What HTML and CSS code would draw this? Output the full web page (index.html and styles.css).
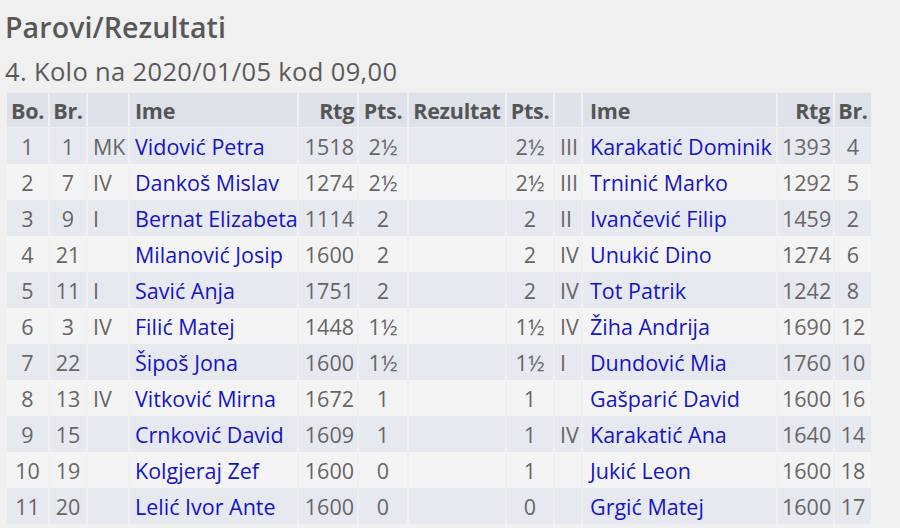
FILE: index.html
```html
<!DOCTYPE html>
<html lang="hr">
<head>
<meta charset="utf-8">
<title>Parovi/Rezultati</title>
<link rel="stylesheet" href="styles.css">
</head>
<body>
<div class="panel">
  <h1 class="title">Parovi/Rezultati</h1>
  <h2 class="round">4. Kolo na 2020/01/05 kod 09,00</h2>
  <table class="pairs">
    <colgroup>
      <col class="c-bo"><col class="c-br"><col class="c-cls"><col class="c-ime"><col class="c-rtg"><col class="c-pts">
      <col class="c-rez"><col class="c-pts2"><col class="c-cls2"><col class="c-ime2"><col class="c-rtg2"><col class="c-br2">
    </colgroup>
    <thead>
      <tr>
        <th class="ctr">Bo.</th><th class="ctr">Br.</th><th></th><th class="lft">Ime</th><th class="rgt">Rtg</th><th class="ctr">Pts.</th>
        <th class="ctr">Rezultat</th><th class="ctr">Pts.</th><th></th><th class="lft ime2">Ime</th><th class="rgt">Rtg</th><th class="ctr">Br.</th>
      </tr>
    </thead>
    <tbody>
      <tr><td class="ctr">1</td><td class="ctr">1</td><td class="lft">MK</td><td class="lft"><a href="#">Vidović Petra</a></td><td class="rgt">1518</td><td class="ctr">2½</td><td></td><td class="ctr">2½</td><td class="lft">III</td><td class="lft ime2"><a href="#">Karakatić Dominik</a></td><td class="rgt">1393</td><td class="ctr">4</td></tr>
      <tr><td class="ctr">2</td><td class="ctr">7</td><td class="lft">IV</td><td class="lft"><a href="#">Dankoš Mislav</a></td><td class="rgt">1274</td><td class="ctr">2½</td><td></td><td class="ctr">2½</td><td class="lft">III</td><td class="lft ime2"><a href="#">Trninić Marko</a></td><td class="rgt">1292</td><td class="ctr">5</td></tr>
      <tr><td class="ctr">3</td><td class="ctr">9</td><td class="lft">I</td><td class="lft"><a href="#">Bernat Elizabeta</a></td><td class="rgt">1114</td><td class="ctr">2</td><td></td><td class="ctr">2</td><td class="lft">II</td><td class="lft ime2"><a href="#">Ivančević Filip</a></td><td class="rgt">1459</td><td class="ctr">2</td></tr>
      <tr><td class="ctr">4</td><td class="ctr">21</td><td class="lft"></td><td class="lft"><a href="#">Milanović Josip</a></td><td class="rgt">1600</td><td class="ctr">2</td><td></td><td class="ctr">2</td><td class="lft">IV</td><td class="lft ime2"><a href="#">Unukić Dino</a></td><td class="rgt">1274</td><td class="ctr">6</td></tr>
      <tr><td class="ctr">5</td><td class="ctr">11</td><td class="lft">I</td><td class="lft"><a href="#">Savić Anja</a></td><td class="rgt">1751</td><td class="ctr">2</td><td></td><td class="ctr">2</td><td class="lft">IV</td><td class="lft ime2"><a href="#">Tot Patrik</a></td><td class="rgt">1242</td><td class="ctr">8</td></tr>
      <tr><td class="ctr">6</td><td class="ctr">3</td><td class="lft">IV</td><td class="lft"><a href="#">Filić Matej</a></td><td class="rgt">1448</td><td class="ctr">1½</td><td></td><td class="ctr">1½</td><td class="lft">IV</td><td class="lft ime2"><a href="#">Žiha Andrija</a></td><td class="rgt">1690</td><td class="ctr">12</td></tr>
      <tr><td class="ctr">7</td><td class="ctr">22</td><td class="lft"></td><td class="lft"><a href="#">Šipoš Jona</a></td><td class="rgt">1600</td><td class="ctr">1½</td><td></td><td class="ctr">1½</td><td class="lft">I</td><td class="lft ime2"><a href="#">Dundović Mia</a></td><td class="rgt">1760</td><td class="ctr">10</td></tr>
      <tr><td class="ctr">8</td><td class="ctr">13</td><td class="lft">IV</td><td class="lft"><a href="#">Vitković Mirna</a></td><td class="rgt">1672</td><td class="ctr">1</td><td></td><td class="ctr">1</td><td class="lft"></td><td class="lft ime2"><a href="#">Gašparić David</a></td><td class="rgt">1600</td><td class="ctr">16</td></tr>
      <tr><td class="ctr">9</td><td class="ctr">15</td><td class="lft"></td><td class="lft"><a href="#">Crnković David</a></td><td class="rgt">1609</td><td class="ctr">1</td><td></td><td class="ctr">1</td><td class="lft">IV</td><td class="lft ime2"><a href="#">Karakatić Ana</a></td><td class="rgt">1640</td><td class="ctr">14</td></tr>
      <tr><td class="ctr">10</td><td class="ctr">19</td><td class="lft"></td><td class="lft"><a href="#">Kolgjeraj Zef</a></td><td class="rgt">1600</td><td class="ctr">0</td><td></td><td class="ctr">1</td><td class="lft"></td><td class="lft ime2"><a href="#">Jukić Leon</a></td><td class="rgt">1600</td><td class="ctr">18</td></tr>
      <tr><td class="ctr">11</td><td class="ctr">20</td><td class="lft"></td><td class="lft"><a href="#">Lelić Ivor Ante</a></td><td class="rgt">1600</td><td class="ctr">0</td><td></td><td class="ctr">0</td><td class="lft"></td><td class="lft ime2"><a href="#">Grgić Matej</a></td><td class="rgt">1600</td><td class="ctr">17</td></tr>
    </tbody>
  </table>
</div>
</body>
</html>
```

FILE: styles.css
```css
html, body {
  margin: 0;
  padding: 0;
  background: #f0f0f0;
}

body {
  font-family: "Open Sans", "Noto Sans", "DejaVu Sans", sans-serif;
  color: #5c5c5c;
  overflow: hidden;
}

.panel {
  padding: 9px 0 0 5px;
}

.title {
  margin: 0;
  font-size: 28.5px;
  line-height: 36px;
  font-weight: 600;
  color: #585858;
  letter-spacing: 0.1px;
}

.round {
  margin: 11px 0 0 0;
  font-size: 25.5px;
  line-height: 30px;
  font-weight: 400;
  color: #5a5a5a;
  letter-spacing: 0.35px;
}

.pairs {
  margin-top: 7px;
  table-layout: fixed;
  width: 868px;
  border-collapse: separate;
  border-spacing: 2px 0;
  font-size: 21.5px;
  letter-spacing: 0;
}

.c-bo { width: 41px; }
.c-br { width: 36px; }
.c-cls { width: 40px; }
.c-ime { width: 167px; }
.c-rtg { width: 58px; }
.c-pts { width: 48px; }
.c-rez { width: 96px; }
.c-pts2 { width: 46px; }
.c-cls2 { width: 26px; }
.c-ime2 { width: 193px; }
.c-rtg2 { width: 55px; }
.c-br2 { width: 36px; }

.pairs th {
  background: #dde1e9;
  color: #555555;
  font-weight: 700;
  height: 34px;
  padding: 0 3px;
  white-space: nowrap;
  border-bottom: 1px solid #f0f0f0;
  letter-spacing: -0.3px;
}

.pairs td {
  height: 36px;
  padding: 0 4px;
  white-space: nowrap;
  overflow: visible;
  color: #666666;
}

.pairs tbody tr:nth-child(odd) td {
  background: #e7e9f0;
}

.pairs tbody tr:nth-child(even) td {
  background: #f4f4f4;
}

.pairs .ctr { text-align: center; }
.pairs .lft { text-align: left; }
.pairs .rgt { text-align: right; }

.pairs th.lft,
.pairs td.lft { padding-left: 5px; }
.pairs td.rgt { padding-right: 3px; }
.pairs th.ime2,
.pairs td.ime2 { padding-left: 7px; }

.pairs a {
  color: #1414c8;
  text-decoration: none;
}
```
